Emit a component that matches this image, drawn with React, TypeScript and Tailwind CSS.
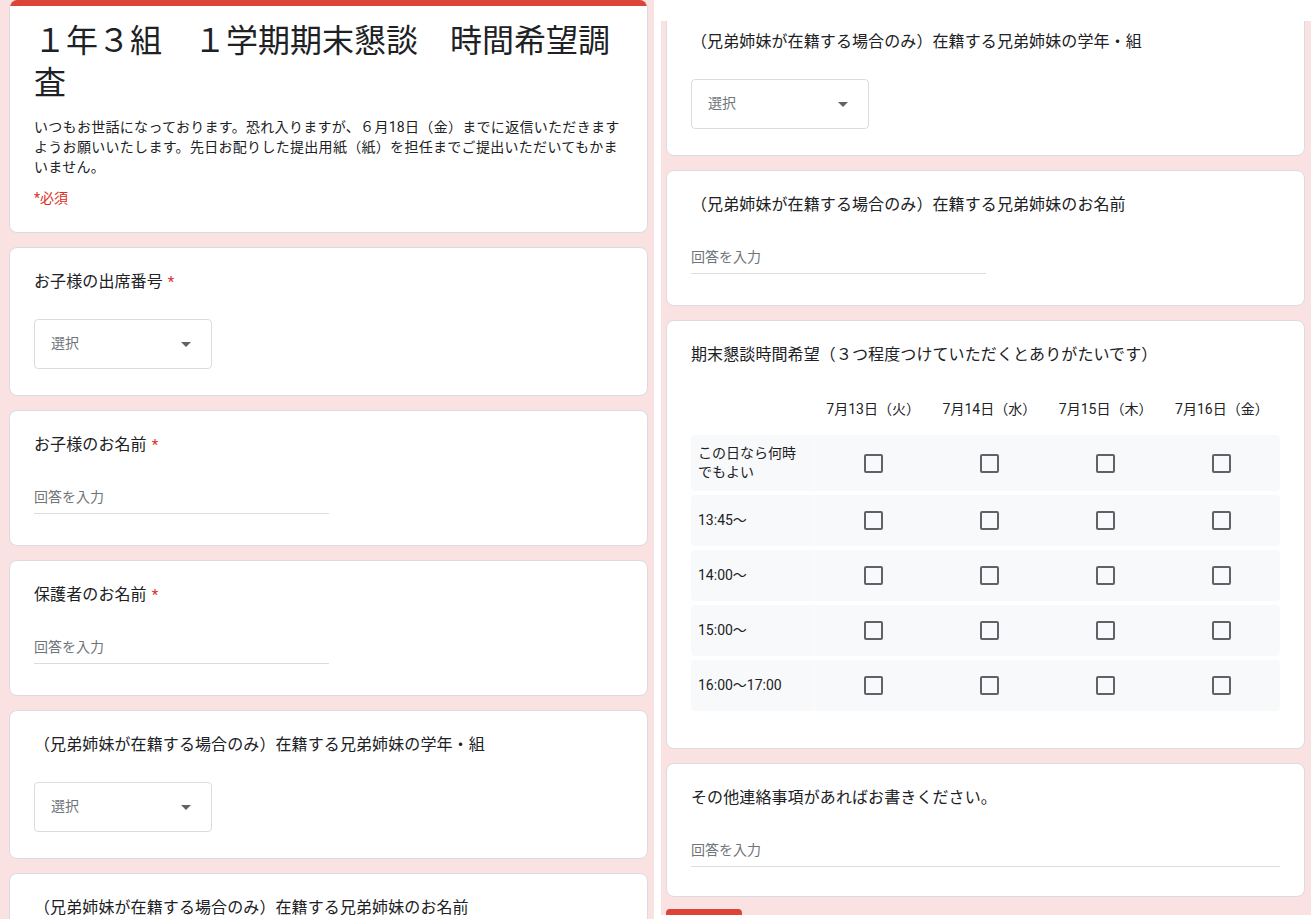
import React from 'react';

const font = { fontFamily: 'Roboto, "Noto Sans CJK JP", sans-serif' };

const Card: React.FC<{ children: React.ReactNode; className?: string }> = ({ children, className = '' }) => (
  <div className={`w-[639px] shrink-0 bg-white border border-[#dadce0] rounded-lg px-6 ${className}`}>{children}</div>
);

const Label: React.FC<{ text: string; required?: boolean }> = ({ text, required }) => (
  <div className="h-6 text-[16px] leading-6 text-[#202124] tracking-[0.1px] whitespace-nowrap">
    {text}
    {required && <span className="text-[#d93025] text-[15px] leading-none ml-[5px]">*</span>}
  </div>
);

const SelectBox: React.FC = () => (
  <div className="mt-[25px] w-[178px] h-[50px] border border-[#dadce0] rounded-[4px] flex items-center justify-between pl-4 pr-5">
    <span className="text-[14px] leading-5 -mt-[2px] text-[#70757a]">選択</span>
    <svg width="10" height="5" viewBox="0 0 10 5">
      <path d="M0 0 L10 0 L5 5 Z" fill="#5f6368" />
    </svg>
  </div>
);

const TextInput: React.FC<{ full?: boolean }> = ({ full }) => (
  <div
    className={`mt-[25px] h-8 border-b border-[#dadce0] flex items-center text-[14px] text-[#70757a] ${
      full ? 'w-full' : 'w-[295px]'
    }`}
  >
    回答を入力
  </div>
);

const SelectQuestion: React.FC<{ text: string; required?: boolean }> = ({ text, required }) => (
  <Card className="pt-[22px] pb-[26px]">
    <Label text={text} required={required} />
    <SelectBox />
  </Card>
);

const TextQuestion: React.FC<{ text: string; required?: boolean; full?: boolean; pb?: string }> = ({
  text,
  required,
  full,
  pb = 'pb-[31px]',
}) => (
  <Card className={`pt-[22px] ${pb}`}>
    <Label text={text} required={required} />
    <TextInput full={full} />
  </Card>
);

const days = ['7月13日（火）', '7月14日（水）', '7月15日（木）', '7月16日（金）'];
const slots = ['この日なら何時でもよい', '13:45〜', '14:00〜', '15:00〜', '16:00〜17:00'];

const Checkbox: React.FC = () => (
  <div className="w-[19px] h-[19px] border-2 border-[#5f6368] rounded-[2px]" />
);

const GridQuestion: React.FC = () => (
  <Card className="pt-[22px] pb-[37px]">
    <Label text="期末懇談時間希望（３つ程度つけていただくとありがたいです）" />
    <div className="mt-4">
      <div className="grid grid-cols-[124px_repeat(4,1fr)] h-[52px] items-center">
        <div />
        {days.map((d) => (
          <div key={d} className="text-center text-[14px] text-[#202124]">
            {d}
          </div>
        ))}
      </div>
      <div className="flex flex-col gap-1">
        {slots.map((s, i) => (
          <div
            key={s}
            className={`grid grid-cols-[124px_repeat(4,1fr)] bg-[#f8f9fa] rounded-[4px] ${
              i === 0 ? 'h-[56px]' : 'h-[51px]'
            }`}
          >
            <div className="flex items-center pl-[7px] pr-[8px] border-r border-[#fcfcfd] text-[14px] leading-[19px] text-[#202124]">
              {s}
            </div>
            {days.map((d) => (
              <div key={d} className="flex items-center justify-center">
                <Checkbox />
              </div>
            ))}
          </div>
        ))}
      </div>
    </div>
  </Card>
);

export default function App() {
  return (
    <div className="flex w-[1313px] h-[919px] overflow-hidden bg-white" style={font}>
      {/* left page */}
      <div className="w-[654px] h-[919px] shrink-0 bg-[#fae2e2] overflow-hidden">
        <div className="pl-[9px] flex flex-col gap-[14px]">
          <div className="w-[639px] shrink-0 bg-white border border-t-0 border-[#dadce0] rounded-lg overflow-hidden">
            <div className="h-[6px] bg-[#db4437]" />
            <div className="px-6 pt-[14px] pb-[24px]">
              <div className="text-[32px] leading-[42px] text-[#202124]">１年３組　１学期期末懇談　時間希望調査</div>
              <div className="mt-[13px] text-[14px] leading-5 tracking-[0.3px] text-[#202124]">
                いつもお世話になっております。恐れ入りますが、６月18日（金）までに返信いただきますようお願いいたします。先日お配りした提出用紙（紙）を担任までご提出いただいてもかまいません。
              </div>
              <div className="mt-[11px] text-[14px] leading-5 text-[#d93025]">*必須</div>
            </div>
          </div>
          <SelectQuestion text="お子様の出席番号" required />
          <TextQuestion text="お子様のお名前" required />
          <TextQuestion text="保護者のお名前" required />
          <SelectQuestion text="（兄弟姉妹が在籍する場合のみ）在籍する兄弟姉妹の学年・組" />
          <TextQuestion text="（兄弟姉妹が在籍する場合のみ）在籍する兄弟姉妹のお名前" />
        </div>
      </div>

      {/* right page */}
      <div className="ml-[7px] mt-[21px] w-[650px] h-[894px] shrink-0 bg-[#fae2e2] overflow-hidden">
        <div className="pl-[5px] -mt-[14px] flex flex-col gap-[14px]">
          <SelectQuestion text="（兄弟姉妹が在籍する場合のみ）在籍する兄弟姉妹の学年・組" />
          <TextQuestion text="（兄弟姉妹が在籍する場合のみ）在籍する兄弟姉妹のお名前" />
          <GridQuestion />
          <TextQuestion text="その他連絡事項があればお書きください。" full pb="pb-[29px]" />
          <div className="-mt-[2px]">
            <button className="w-[76px] h-9 rounded-[4px] bg-[#db4437] text-white text-[14px] font-medium">送信</button>
          </div>
        </div>
      </div>
    </div>
  );
}
